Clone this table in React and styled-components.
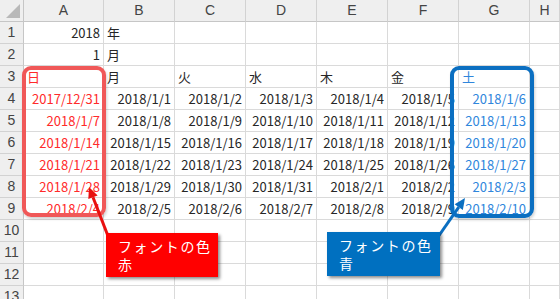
import React from "react";
import styled, { createGlobalStyle } from "styled-components";

const Global = createGlobalStyle`
  html, body { margin: 0; padding: 0; background: #fff; overflow: hidden; }
  body { font-family: "Noto Sans CJK JP", "Noto Sans", sans-serif; }
`;

const Sheet = styled.div`
  position: relative;
  width: 560px;
  height: 299px;
  overflow: hidden;
`;

const Grid = styled.div`
  display: grid;
  grid-template-columns: 24px 80px repeat(6, 71px) 1fr;
  grid-auto-rows: 22px;
`;

const Cell = styled.div`
  box-sizing: border-box;
  border-right: 1px solid #dadada;
  border-bottom: 1px solid #dadada;
  font-size: 13px;
  line-height: 21px;
  padding: 0 3px;
  white-space: nowrap;
  overflow: hidden;
  text-align: ${(p) => (p.$align === "left" ? "left" : "right")};
  color: ${(p) => (p.$tone === "red" ? "#ff2a2a" : p.$tone === "blue" ? "#2f86dc" : "#262626")};
`;

const ColHead = styled.div`
  box-sizing: border-box;
  background: #efefef;
  border-right: 1px solid #d2d2d2;
  border-bottom: 1px solid #c6c6c6;
  font-family: "Liberation Sans", Arial, sans-serif;
  font-size: 14px;
  line-height: 21px;
  text-align: center;
  color: #444;
`;

const RowHead = styled(ColHead)`
  border-right: 1px solid #c6c6c6;
  border-bottom: 1px solid #d2d2d2;
`;

const Corner = styled.div`
  position: relative;
  box-sizing: border-box;
  background: #efefef;
  border-right: 1px solid #c6c6c6;
  border-bottom: 1px solid #c6c6c6;
  &::after {
    content: "";
    position: absolute;
    right: 3px;
    bottom: 3px;
    width: 0;
    height: 0;
    border-left: 14px solid transparent;
    border-bottom: 14px solid #b9b9b9;
  }
`;

/* Rounded highlight drawn over a column of cells */
const Frame = styled.div`
  position: absolute;
  box-sizing: border-box;
  left: ${(p) => p.$x}px;
  top: ${(p) => p.$y}px;
  width: ${(p) => p.$w}px;
  height: ${(p) => p.$h}px;
  border: 4px solid ${(p) => p.$color};
  border-radius: 9px;
  box-shadow: 1px 2px 3px rgba(0, 0, 0, 0.18);
  pointer-events: none;
`;

/* Annotation box floating over the sheet */
const Callout = styled.div`
  position: absolute;
  box-sizing: border-box;
  display: flex;
  flex-direction: column;
  left: ${(p) => p.$x}px;
  top: ${(p) => p.$y}px;
  width: ${(p) => p.$w}px;
  height: 44px;
  padding: 4px 0 0 12px;
  background: ${(p) => p.$bg};
  color: #fff;
  font-size: 14px;
  line-height: 18px;
  letter-spacing: 1.6px;
  box-shadow: 2px 2px 3px rgba(0, 0, 0, 0.45);
`;

const Arrows = styled.svg`
  position: absolute;
  left: 0;
  top: 0;
  pointer-events: none;
`;

const cols = ["A", "B", "C", "D", "E", "F", "G", "H"];
const weekdays = ["月", "火", "水", "木", "金"];

const fmt = (d) => `${d.getFullYear()}/${d.getMonth() + 1}/${d.getDate()}`;

function buildRows() {
  const rows = [];
  rows.push([{ t: "2018" }, { t: "年", a: "left" }]);
  rows.push([{ t: "1" }, { t: "月", a: "left" }]);
  rows.push([
    { t: "日", a: "left", tone: "red" },
    ...weekdays.map((w) => ({ t: w, a: "left" })),
    { t: "土", a: "left", tone: "blue" },
  ]);
  const start = new Date(2017, 11, 31);
  for (let w = 0; w < 6; w++) {
    const row = [];
    for (let d = 0; d < 7; d++) {
      const day = new Date(start.getFullYear(), start.getMonth(), start.getDate() + w * 7 + d);
      row.push({ t: fmt(day), tone: d === 0 ? "red" : d === 6 ? "blue" : undefined });
    }
    rows.push(row);
  }
  while (rows.length < 13) rows.push([]);
  return rows;
}

function Arrow({ x1, y1, x2, y2, color }) {
  const ang = Math.atan2(y2 - y1, x2 - x1);
  const len = 11;
  const half = 5;
  const bx = x2 - len * Math.cos(ang);
  const by = y2 - len * Math.sin(ang);
  const px = -Math.sin(ang) * half;
  const py = Math.cos(ang) * half;
  return (
    <g>
      <line x1={x1} y1={y1} x2={bx} y2={by} stroke={color} strokeWidth="3" />
      <polygon points={`${x2},${y2} ${bx + px},${by + py} ${bx - px},${by - py}`} fill={color} />
    </g>
  );
}

export default function App() {
  const rows = buildRows();
  return (
    <>
      <Global />
      <Sheet>
        <Grid>
          <Corner />
          {cols.map((c) => (
            <ColHead key={c}>{c}</ColHead>
          ))}
          {rows.map((row, r) => (
            <React.Fragment key={r}>
              <RowHead>{r + 1}</RowHead>
              {cols.map((c, i) => {
                const cell = row[i];
                return (
                  <Cell key={c} $align={cell?.a} $tone={cell?.tone}>
                    {cell?.t}
                  </Cell>
                );
              })}
            </React.Fragment>
          ))}
        </Grid>

        <Frame $x={22} $y={66} $w={84} $h={151} $color="#f05858" />
        <Frame $x={450} $y={66} $w={84} $h={152} $color="#0b6fc1" />

        <Arrows width="560" height="299">
          <Arrow x1={108} y1={236} x2={89} y2={187} color="#e81010" />
          <Arrow x1={438} y1={237} x2={465} y2={198} color="#0b6fc1" />
        </Arrows>

        <Callout $x={106} $y={233} $w={112} $bg="#ff0000">
          <span>フォントの色</span>
          <span>赤</span>
        </Callout>
        <Callout $x={327} $y={232} $w={113} $bg="#0070c0">
          <span>フォントの色</span>
          <span>青</span>
        </Callout>
      </Sheet>
    </>
  );
}
